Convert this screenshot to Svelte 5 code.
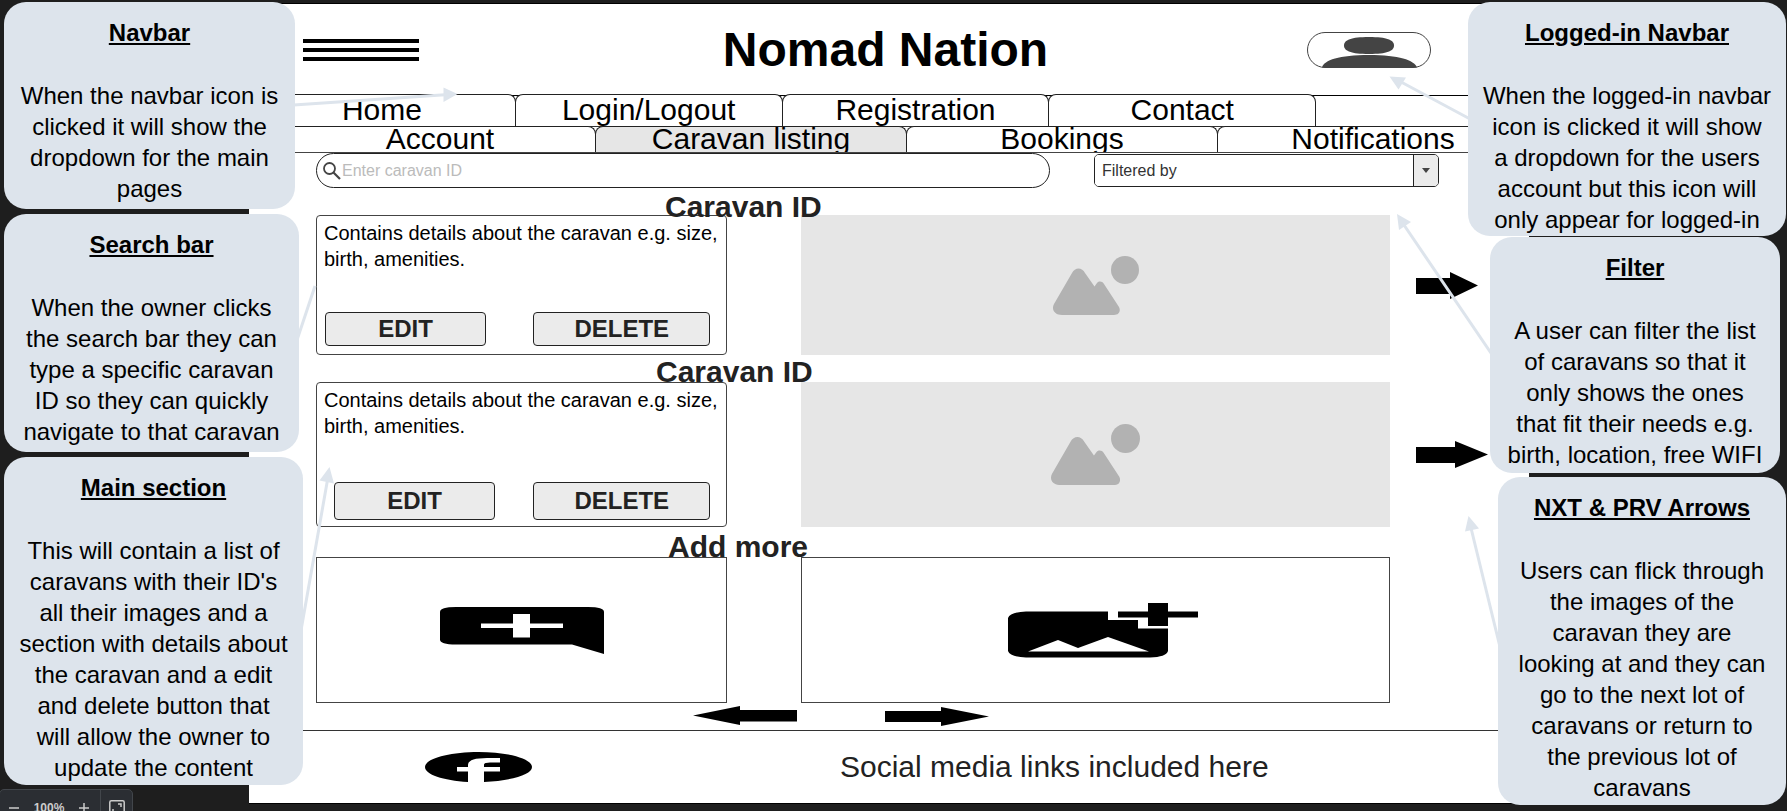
<script>
  const pages = ['Home', 'Login/Logout', 'Registration', 'Contact'];
  const account = ['Account', 'Caravan listing', 'Bookings', 'Notifications'];
  const caravans = [
    { id: 'first', arrow: 'M0 6H34V0L62 13.5L34 27V22H0Z' },
    { id: 'second', arrow: 'M0 6H39V0L72 13.5L39 27V22H0Z' }
  ];
  const leftNotes = [
    { kind: 'navbar', title: 'Navbar', text: 'When the navbar icon is\nclicked it will show the\ndropdown for the main\npages' },
    { kind: 'search-note', title: 'Search bar', text: 'When the owner clicks\nthe search bar they can\ntype a specific caravan\nID so they can quickly\nnavigate to that caravan' },
    { kind: 'main-note', title: 'Main section', text: "This will contain a list of\ncaravans with their ID's\nall their images and a\nsection with details about\nthe caravan and a edit\nand delete button that\nwill allow the owner to\nupdate the content" }
  ];
  const rightNotes = [
    { kind: 'logged', title: 'Logged-in Navbar', text: 'When the logged-in navbar\nicon is clicked it will show\na dropdown for the users\naccount but this icon will\nonly appear for logged-in' },
    { kind: 'filter-note', title: 'Filter', text: 'A user can filter the list\nof caravans so that it\nonly shows the ones\nthat fit their needs e.g.\nbirth, location, free WIFI' },
    { kind: 'arrows-note', title: 'NXT & PRV Arrows', text: 'Users can flick through\nthe images of the\ncaravan they are\nlooking at and they can\ngo to the next lot of\ncaravans or return to\nthe previous lot of\ncaravans' }
  ];
</script>

{#snippet note(n)}
  <article class="note {n.kind}">
    <h3>{n.title}</h3>
    <p>{n.text}</p>
  </article>
{/snippet}

<div class="canvas">
  <div class="page">
    <header>
      <button class="burger" aria-label="Menu"><span></span><span></span><span></span></button>
      <h1>Nomad Nation</h1>
      <button class="user" aria-label="Account menu">
        <svg width="124" height="36" viewBox="0 0 124 36">
          <path d="M15 35.5C17 28 32 23 62 23S107 28 110 35.5Z" fill="#444" />
          <path d="M37 13.5C37 8 44 5 62 5S87 8 87 13.5S80 22 62 22S37 19 37 13.5Z" fill="#444" />
          <rect x=".5" y=".5" width="123" height="35" rx="17.500" fill="none" stroke="#444" />
        </svg>
      </button>
    </header>

    <nav class="tabs pages">
      {#each pages as p}<a href="#top">{p}</a>{/each}
    </nav>
    <nav class="tabs account">
      {#each account as p}<a href="#top" class:active={p === 'Caravan listing'}>{p}</a>{/each}
    </nav>

    <div class="tools">
      <label class="search">
        <svg width="18" height="18" viewBox="0 0 18 18" fill="none" stroke="#444">
          <circle cx="6.500" cy="6.500" r="5.500" stroke-width="1.800" />
          <path d="M10.500 10.500L17 17" stroke-width="2.200" />
        </svg>
        <input type="text" placeholder="Enter caravan ID" aria-label="Enter caravan ID" />
      </label>
      <div class="filter">
        <select aria-label="Filter"><option>Filtered by</option></select>
        <span class="drop"><svg width="8" height="5" viewBox="0 0 8 5"><path d="M0 0H8L4 5Z" fill="#444" /></svg></span>
      </div>
    </div>

    <main>
      {#each caravans as c}
        <h2 class={c.id}>Caravan ID</h2>
        <section class="row {c.id}">
          <div class="card">
            <p>Contains details about the caravan e.g. size, birth, amenities.</p>
            <div class="actions">
              <button>EDIT</button>
              <button class="delete">DELETE</button>
            </div>
          </div>
          <div class="picture">
            <svg viewBox="0 0 86 59" fill="#b2b2b2">
              <circle cx="72" cy="14" r="14" />
              <path d="M19 17C22 11 29 11 32 17L41.500 30.500L44 27C46 25 49 25 51 28L66 51C68 55 66 59 61 59H9C2 59-2 54 1 48Z" />
            </svg>
          </div>
          <button class="next" aria-label="Next image">
            <svg width="72" height="27" viewBox="0 0 72 27"><path d={c.arrow} /></svg>
          </button>
        </section>
      {/each}

      <h2 class="add">Add more</h2>
      <section class="row adders">
        <button class="box" aria-label="Add details">
          <svg width="164" height="47" viewBox="0 0 164 47">
            <path fill-rule="evenodd" d="M16 0H148Q164 0 164 5V47L132 37.500H16Q0 37.500 0 32.500V5Q0 0 16 0ZM73 7V16.500H41V21H73V30.500H90V21H123V16.500H90V7Z" />
          </svg>
        </button>
        <button class="box photo" aria-label="Add image">
          <svg width="190" height="55" viewBox="0 0 190 55">
            <path d="M18 8.500H100V17H130V25.500H160V48Q158 54 142 54.500H18Q2 54 0 48V15Q2 9 18 8.500Z" />
            <path d="M20 48.500L50 37L70 45L100 34L141 48.500Z" fill="#fff" />
            <path d="M110 8.500H140V0H160V8.500H190V14.500H160V23H140V14.500H110Z" />
          </svg>
        </button>
      </section>

      <div class="pager">
        <button aria-label="Previous caravans"><svg width="104" height="20" viewBox="0 0 104 20"><path d="M0 9.500L47 0V4H104V15.500H47V19Z" /></svg></button>
        <button aria-label="Next caravans"><svg width="104" height="20" viewBox="0 0 104 20"><path d="M0 5H56V1L104 10.500L56 20V16H0Z" /></svg></button>
      </div>
    </main>

    <footer>
      <a href="#top" aria-label="Facebook">
        <svg width="107" height="30" viewBox="0 0 107 30">
          <path d="M43 30C18 28.500 0 22.500 0 15C0 6.700 24 0 53.500 0S107 6.700 107 15C107 22.500 87 28.500 59 30V19.500H75V15H59V12.500Q59 10.500 65 10.500H75V6H62Q43 6 43 13V15H32V19.500H43Z" />
        </svg>
      </a>
      <p>Social media links included here</p>
    </footer>
  </div>

  <svg class="pointers left" width="480" height="811" viewBox="0 0 480 811">
    <g stroke="#dde4ec" stroke-width="3" fill="none">
      <path d="M290 105.300L445 94.700M296 343L315 286M300 636L327.500 480" />
    </g>
    <path d="M457.500 94L443.500 87.500V102ZM329.500 467L319.500 480.500L334 483.500Z" fill="#dde4ec" />
  </svg>
  <svg class="pointers right" width="400" height="811" viewBox="0 0 400 811">
    <g stroke="#dde4ec" stroke-width="3" fill="none">
      <path d="M84 119.500L15 82.500M106 356L17 225M113 647L84 528" />
    </g>
    <path d="M2.500 76.500L19 77.500L11.500 89.500ZM10 214L24 222L12 230ZM81.500 516L78 531.500L92 528.500Z" fill="#dde4ec" />
  </svg>

  <aside class="notes left">
    {#each leftNotes as n}{@render note(n)}{/each}
  </aside>
  <aside class="notes right">
    {#each rightNotes as n}{@render note(n)}{/each}
  </aside>

  <div class="zoombar">
    <button aria-label="Zoom out"><svg width="10" height="10" viewBox="0 0 10 10"><path d="M0 5H10" /></svg></button>
    <span>100%</span>
    <button aria-label="Zoom in"><svg width="10" height="10" viewBox="0 0 10 10"><path d="M0 5H10M5 0V10" /></svg></button>
    <button class="fit" aria-label="Fit to screen"><svg width="16" height="16" viewBox="0 0 16 16"><rect x=".8" y=".8" width="14.400" height="14.400" rx="1.500" /><path d="M9 4H12V7M4 9V12H7" /></svg></button>
  </div>
</div>

<style>
  :global(body) {
    margin: 0;
    background: #1e1e1e;
  }
  .canvas {
    position: relative;
    min-height: 100vh;
    box-sizing: border-box;
    padding: 3px 258px 0 249px;
    overflow: hidden;
    font-family: 'Liberation Sans', Arial, sans-serif;
    color: #000;
  }
  .canvas * {
    box-sizing: border-box;
  }
  h1, h2, h3, p {
    margin: 0;
  }
  button {
    font: inherit;
    margin: 0;
    padding: 0;
    border: 0;
    background: none;
  }
  svg {
    display: block;
  }
  .page {
    background: #fff;
    border-top: 1px solid #000;
    border-bottom: 1px solid #000;
  }
  header {
    display: grid;
    grid-template-columns: 1fr auto 1fr;
    align-items: center;
    height: 90px;
    padding: 2px 7px 0 0;
  }
  .burger {
    display: grid;
    gap: 5px;
    width: 116px;
    margin-left: 54px;
  }
  .burger span {
    height: 4px;
    background: #000;
  }
  h1 {
    font-size: 48px;
    line-height: 56px;
  }
  .user {
    justify-self: end;
    margin-right: 91px;
  }
  .tabs {
    display: grid;
    line-height: 34px;
    font-size: 30px;
  }
  .tabs a {
    display: flex;
    justify-content: center;
    align-items: center;
    overflow: hidden;
    margin-left: -1px;
    padding-bottom: 2px;
    border: 1px solid #222;
    border-bottom: 0;
    border-radius: 8px 8px 0 0;
    background: #fff;
    color: #000;
    text-decoration: none;
    white-space: nowrap;
  }
  .pages {
    grid-template-columns: repeat(4, 267fr) 213fr;
    height: 32px;
    background: linear-gradient(#000, #000) 0 1px / 100% 1px no-repeat;
  }
  .account {
    grid-template-columns: repeat(4, 1fr);
    height: 27px;
    padding-left: 36px;
    border-bottom: 1px solid #444;
    background: linear-gradient(#333, #333) 0 0 / 100% 1px no-repeat;
  }
  .tabs .active {
    background: #e6e6e6;
  }
  .tools {
    display: grid;
    grid-template-columns: 734fr 345fr;
    column-gap: 44px;
    align-items: center;
    padding: 0 90px 1px 67px;
  }
  .search {
    display: flex;
    align-items: center;
    height: 35px;
    padding-left: 6px;
    border: 1px solid #222;
    border-radius: 18px;
  }
  .search input {
    flex: 1;
    min-width: 0;
    padding: 0 0 0 1px;
    border: 0;
    outline: 0;
    background: none;
    font: 16px 'Liberation Sans', Arial, sans-serif;
  }
  .search input::placeholder {
    color: #bbb;
  }
  .filter {
    display: flex;
    height: 33px;
    border: 1px solid #222;
    border-radius: 5px;
    overflow: hidden;
  }
  .filter select {
    flex: 1;
    appearance: none;
    border: 0;
    padding: 0 7px;
    background: #fff;
    color: #333;
    font: 16px 'Liberation Sans', Arial, sans-serif;
  }
  .drop {
    display: grid;
    place-items: center;
    width: 25px;
    border-left: 1px solid #222;
    background: #ebebeb;
  }
  main {
    padding-left: 67px;
  }
  h2 {
    position: relative;
    z-index: 1;
    margin-bottom: -7px;
    font-size: 30px;
    line-height: 34px;
    color: #222;
  }
  h2.first {
    margin-top: 1px;
    margin-bottom: -9px;
    padding-left: 349px;
  }
  h2.second {
    padding-left: 340px;
  }
  h2.add {
    margin-top: 3px;
    padding-left: 352px;
  }
  .row {
    display: grid;
    grid-template-columns: 411fr 588fr 65px;
    column-gap: 74px;
    height: 140px;
  }
  .row.second {
    height: 145px;
  }
  .row.adders {
    height: 146px;
  }
  .row > .next {
    justify-self: start;
    align-self: center;
    margin-left: -48px;
  }
  .card {
    display: flex;
    flex-direction: column;
    justify-content: space-between;
    padding: 4px 7px 8px;
    border: 1px solid #444;
    border-radius: 4px;
    background: #fff;
  }
  .card p {
    font-size: 20px;
    line-height: 26px;
  }
  .actions {
    display: grid;
    grid-template-columns: 161fr 177fr;
    column-gap: 47px;
    padding: 0 9px 0 1px;
  }
  .actions button {
    height: 34px;
    border: 1px solid #222;
    border-radius: 4px;
    background: #ebebeb;
    color: #222;
    font-size: 24px;
    font-weight: 700;
  }
  .second .card {
    padding-bottom: 6px;
  }
  .second .actions {
    column-gap: 38px;
    padding-left: 10px;
  }
  .second .actions button {
    height: 38px;
  }
  .picture {
    display: grid;
    place-items: center;
    background: #e6e6e6;
  }
  .picture svg {
    width: 86px;
  }
  .second .picture svg {
    width: 89px;
  }
  .box {
    display: grid;
    place-items: center;
    border: 1px solid #444;
  }
  .photo {
    padding-left: 14px;
  }
  .pager {
    display: flex;
    gap: 88px;
    padding: 3px 0 4px 377px;
  }
  footer {
    display: flex;
    align-items: center;
    height: 73px;
    border-top: 1px solid #333;
    padding-left: 176px;
  }
  footer p {
    margin-left: 308px;
    font-size: 30px;
    line-height: 34px;
    color: #222;
  }
  .pointers {
    position: absolute;
    top: 0;
    z-index: 2;
    pointer-events: none;
  }
  .pointers.left {
    left: 0;
  }
  .pointers.right {
    right: 0;
  }
  .notes {
    position: absolute;
    top: 2px;
    z-index: 3;
    display: flex;
    flex-direction: column;
  }
  .notes.left {
    left: 4px;
    gap: 5px;
  }
  .notes.right {
    right: 1px;
    gap: 1px;
    align-items: flex-end;
  }
  .note {
    padding: 15px 0 1px;
    border-radius: 22px;
    background: #dde4ec;
    font-size: 24px;
    line-height: 31px;
    text-align: center;
    white-space: pre-line;
  }
  .note h3 {
    margin-bottom: 32px;
    font-size: 24px;
    text-decoration: underline;
  }
  .navbar {
    width: 291px;
    min-height: 207px;
  }
  .search-note {
    width: 295px;
    min-height: 238px;
  }
  .main-note {
    width: 299px;
    min-height: 328px;
  }
  .logged {
    width: 318px;
  }
  .filter-note {
    width: 290px;
    min-height: 236px;
    margin: 0 6px 3px 0;
  }
  .arrows-note {
    width: 288px;
    min-height: 328px;
  }
  .zoombar {
    position: absolute;
    left: -1px;
    bottom: -15px;
    z-index: 4;
    display: flex;
    align-items: center;
    height: 37px;
    width: 134px;
    padding-left: 9px;
    border: 1px solid #42464b;
    border-radius: 5px;
    background: #2b2e33;
    color: #ccc;
    font-size: 12px;
    font-weight: 700;
  }
  .zoombar span {
    width: 60px;
    text-align: center;
  }
  .zoombar svg {
    fill: none;
    stroke: #ccc;
    stroke-width: 1.5;
  }
  .zoombar .fit {
    display: grid;
    place-items: center;
    align-self: stretch;
    flex: 1;
    margin-left: 11px;
    border-left: 1px solid #42464b;
  }
</style>
